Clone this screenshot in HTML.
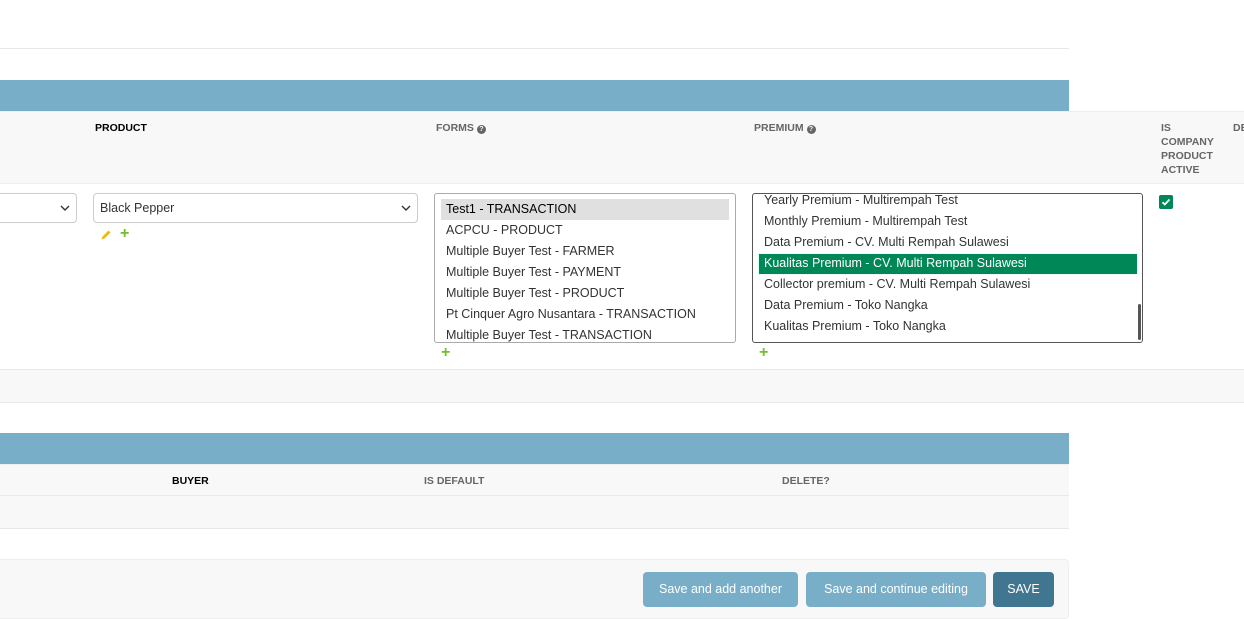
<!DOCTYPE html>
<html><head><style>
*{box-sizing:border-box}
body{margin:0;width:1244px;height:610px;overflow:hidden;background:#fff;font-family:"Liberation Sans",sans-serif;font-size:13px;color:#333;position:relative}
.a{position:absolute}
.blue{background:#79aec8}
.th{font-size:10.5px;font-weight:bold;color:#666;text-transform:uppercase}
.sel{border:1px solid #ccc;border-radius:4px;background:#fff}
.opt{position:absolute;left:11px;font-size:12.5px;color:#333;line-height:21px}
.plus{color:#70bf2b;font-weight:bold;font-size:16px}
.q{display:inline-block;width:9px;height:9px;border-radius:50%;background:#666;color:#fff;font-size:7px;line-height:9px;text-align:center;vertical-align:0px}
.btn{position:absolute;top:572px;height:35px;border-radius:4px;background:#79aec8;color:#fff;font-size:12.5px;line-height:35px;text-align:center}
</style></head><body>
<div class="a" style="left:0;top:48px;width:1069px;height:1px;background:#e8e8e8"></div>
<div class="a blue" style="left:0;top:80px;width:1069px;height:31px"></div>
<div class="a" style="left:0;top:111px;width:1244px;height:73px;background:#f8f8f8;border-top:1px solid #eee;border-bottom:1px solid #eee"></div>
<div class="a th" style="left:95px;top:122px;color:#000">Product</div>
<div class="a th" style="left:436px;top:122px">Forms <span class="q">?</span></div>
<div class="a th" style="left:754px;top:122px">Premium <span class="q">?</span></div>
<div class="a th" style="left:1161px;top:121px;line-height:14px">IS<br>COMPANY<br>PRODUCT<br>ACTIVE</div>
<div class="a th" style="left:1233px;top:122px">DE</div>

<div class="a sel" style="left:-10px;top:193px;width:87px;height:30px"><svg class="a" style="right:6px;top:11px" width="10" height="6" viewBox="0 0 10 6"><path d="M1 1l4 4 4-4" fill="none" stroke="#333" stroke-width="1.4"/></svg></div>
<div class="a sel" style="left:93px;top:193px;width:325px;height:30px"><span class="a" style="left:6px;top:7px;color:#333;font-size:12.5px">Black Pepper</span><svg class="a" style="right:6px;top:11px" width="10" height="6" viewBox="0 0 10 6"><path d="M1 1l4 4 4-4" fill="none" stroke="#333" stroke-width="1.4"/></svg></div>
<svg class="a" style="left:100px;top:229px" width="12" height="12" viewBox="0 0 12 12"><path d="M1.5 10.5l1-3 6-6 2 2-6 6z" fill="#efb80b"/></svg>
<span class="a plus" style="left:120px;top:225px">+</span>

<div class="a" style="left:434px;top:193px;width:302px;height:150px;border:1px solid #aaa;border-radius:3px;background:#fff;overflow:hidden">
<div class="a" style="left:6px;top:5px;width:288px;height:21px;background:#e0e0e0"></div>
<div class="opt" style="top:5px;color:#000">Test1 - TRANSACTION</div>
<div class="opt" style="top:26px">ACPCU - PRODUCT</div>
<div class="opt" style="top:47px">Multiple Buyer Test - FARMER</div>
<div class="opt" style="top:68px">Multiple Buyer Test - PAYMENT</div>
<div class="opt" style="top:89px">Multiple Buyer Test - PRODUCT</div>
<div class="opt" style="top:110px">Pt Cinquer Agro Nusantara - TRANSACTION</div>
<div class="opt" style="top:131px">Multiple Buyer Test - TRANSACTION</div>
</div>
<span class="a plus" style="left:441px;top:344px">+</span>

<div class="a" style="left:752px;top:193px;width:391px;height:150px;border:1px solid #555;border-radius:3px;background:#fff;overflow:hidden">
<div class="opt" style="top:-4px">Yearly Premium - Multirempah Test</div>
<div class="opt" style="top:17px">Monthly Premium - Multirempah Test</div>
<div class="opt" style="top:38px">Data Premium - CV. Multi Rempah Sulawesi</div>
<div class="a" style="left:6px;top:60px;width:378px;height:20px;background:#008757;outline:1px dotted #cfe"></div>
<div class="opt" style="top:59px;color:#fff">Kualitas Premium - CV. Multi Rempah Sulawesi</div>
<div class="opt" style="top:80px">Collector premium - CV. Multi Rempah Sulawesi</div>
<div class="opt" style="top:101px">Data Premium - Toko Nangka</div>
<div class="opt" style="top:122px">Kualitas Premium - Toko Nangka</div>
<div class="a" style="left:385px;top:110px;width:3px;height:36px;background:#555;border-radius:2px"></div>
</div>
<span class="a plus" style="left:759px;top:344px">+</span>

<div class="a" style="left:1159px;top:195px;width:14px;height:14px;background:#008757;border-radius:2px"><svg width="14" height="14" viewBox="0 0 14 14"><path d="M3.5 7.2l2.3 2.3 4.7-5" fill="none" stroke="#fff" stroke-width="1.8"/></svg></div>

<div class="a" style="left:0;top:369px;width:1244px;height:34px;background:#f8f8f8;border-top:1px solid #e8e8e8;border-bottom:1px solid #e8e8e8"></div>

<div class="a blue" style="left:0;top:433px;width:1069px;height:31px"></div>
<div class="a" style="left:0;top:464px;width:1069px;height:32px;background:#f8f8f8;border-top:1px solid #eee;border-bottom:1px solid #e8e8e8"></div>
<div class="a th" style="left:172px;top:475px;color:#000">Buyer</div>
<div class="a th" style="left:424px;top:475px">Is default</div>
<div class="a th" style="left:782px;top:475px">Delete?</div>
<div class="a" style="left:0;top:496px;width:1069px;height:33px;background:#f8f8f8;border-bottom:1px solid #e8e8e8"></div>

<div class="a" style="left:-5px;top:559px;width:1074px;height:60px;background:#f8f8f8;border:1px solid #eee;border-radius:4px"></div>
<div class="btn" style="left:643px;width:155px">Save and add another</div>
<div class="btn" style="left:806px;width:180px">Save and continue editing</div>
<div class="btn" style="left:993px;width:61px;background:#417690">SAVE</div>
</body></html>
